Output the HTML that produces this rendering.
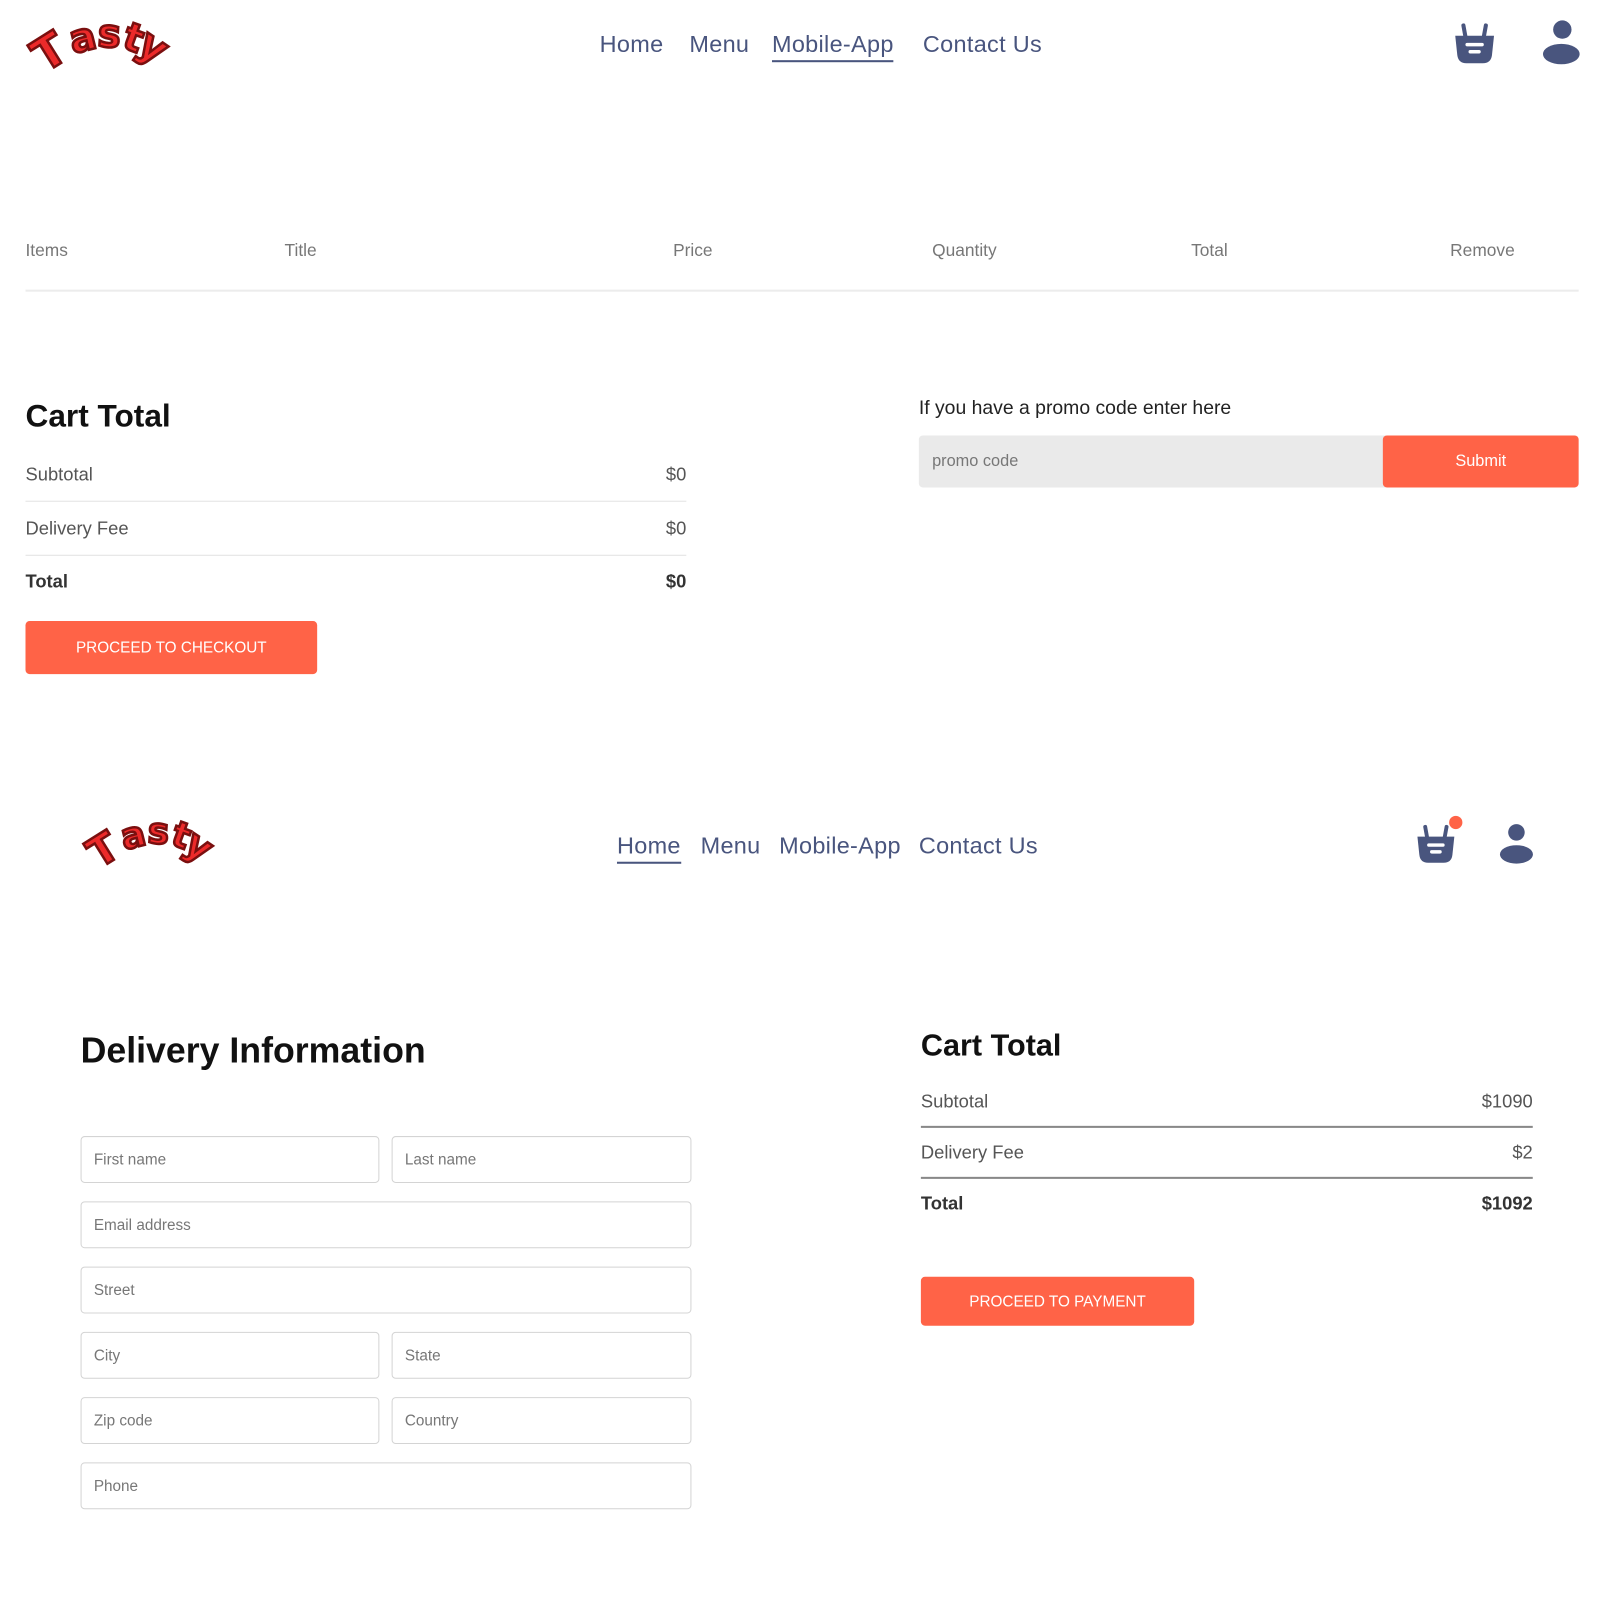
<!DOCTYPE html>
<html><head><meta charset="utf-8">
<style>
*{margin:0;padding:0;box-sizing:border-box}
html,body{width:1599px;height:1599px;overflow:hidden;background:#fff}
body{font-family:"Liberation Sans",sans-serif}
#w{position:absolute;left:0;top:0;width:1568px;height:1568px;transform:scale(1.0198);transform-origin:0 0}
.a{position:absolute;white-space:nowrap}
.nav{font-size:23px;color:#49557e;letter-spacing:0.3px}
.ul{border-bottom:2px solid #49557e;padding-bottom:2px}
.hd{font-size:17px;color:#777}
.row{font-size:18px;color:#555}
.hr{position:absolute;height:1px;background:#e2e2e2}
.hr2{position:absolute;height:2px;background:#888}
.btn{position:absolute;background:#ff6347;color:#fff;font-size:15px;display:flex;align-items:center;justify-content:center;border-radius:4px}
.in{position:absolute;height:46px;border:1px solid #d4d4d4;border-radius:4px;font-size:15px;color:#777;padding-left:12px;display:flex;align-items:center}
.logo span{position:absolute;font-weight:900;color:#ec2a2a;-webkit-text-stroke:2.5px #7a0f0f;font-family:"DejaVu Sans","Liberation Sans",sans-serif;line-height:1}
</style></head><body><div id="w">

<svg width="0" height="0" style="position:absolute"><defs>
<symbol id="bk" viewBox="0 0 42 44"><path d="M12 16 L10 5 M30 16 L32 5" stroke="#49557e" stroke-width="4" stroke-linecap="round"/><path d="M2 15 H40 L38 34 Q37 42 29 42 H13 Q5 42 4 34 Z" fill="#49557e"/><rect x="12" y="22" width="18" height="3.5" rx="1.7" fill="#fff"/><rect x="15" y="29" width="12" height="3.5" rx="1.7" fill="#fff"/></symbol>
</defs></svg>

<!-- logo 1 -->
<div class="a logo" style="left:30px;top:8px;width:150px;height:70px">
<span style="left:4px;top:22px;font-size:44px;transform:rotate(-32deg)">T</span>
<span style="left:38px;top:10px;font-size:38px;transform:rotate(-14deg)">a</span>
<span style="left:66px;top:6px;font-size:38px;transform:rotate(4deg)">s</span>
<span style="left:92px;top:10px;font-size:38px;transform:rotate(20deg)">t</span>
<span style="left:107px;top:18px;font-size:40px;transform:rotate(34deg)">y</span>
</div>
<div class="a nav" style="left:588px;top:30px">Home</div>
<div class="a nav" style="left:676px;top:30px">Menu</div>
<div class="a nav ul" style="left:757px;top:30px">Mobile-App</div>
<div class="a nav" style="left:905px;top:30px">Contact Us</div>
<svg class="a" style="left:1425px;top:20px" width="42" height="44"><use href="#bk"/></svg>
<svg class="a" style="left:1511px;top:18px" width="40" height="46" viewBox="0 0 40 46"><circle cx="21" cy="11" r="9" fill="#49557e"/><ellipse cx="20" cy="35" rx="18" ry="10" fill="#49557e"/></svg>

<!-- table header -->
<div class="a hd" style="left:25px;top:236px">Items</div>
<div class="a hd" style="left:279px;top:236px">Title</div>
<div class="a hd" style="left:660px;top:236px">Price</div>
<div class="a hd" style="left:914px;top:236px">Quantity</div>
<div class="a hd" style="left:1168px;top:236px">Total</div>
<div class="a hd" style="left:1422px;top:236px">Remove</div>
<div class="hr" style="left:25px;top:284px;width:1523px;background:#ececec;height:2px"></div>

<!-- cart total 1 -->
<div class="a" style="left:25px;top:390px;font-size:31px;font-weight:bold;color:#111">Cart Total</div>
<div class="a row" style="left:25px;top:455px">Subtotal</div>
<div class="a row" style="right:895px;top:455px">$0</div>
<div class="hr" style="left:25px;top:491px;width:648px"></div>
<div class="a row" style="left:25px;top:508px">Delivery Fee</div>
<div class="a row" style="right:895px;top:508px">$0</div>
<div class="hr" style="left:25px;top:544px;width:648px"></div>
<div class="a row" style="left:25px;top:560px;font-weight:bold;color:#333">Total</div>
<div class="a row" style="right:895px;top:560px;font-weight:bold;color:#333">$0</div>
<div class="btn" style="left:25px;top:609px;width:286px;height:52px">PROCEED TO CHECKOUT</div>

<div class="a" style="left:901px;top:390px;font-size:19px;color:#222">If you have a promo code enter here</div>
<div class="a" style="left:901px;top:427px;width:460px;height:51px;background:#eaeaea;border-radius:4px 0 0 4px;font-size:16px;color:#777;padding-left:13px;display:flex;align-items:center">promo code</div>
<div class="btn" style="left:1356px;top:427px;width:192px;height:51px;font-size:16px">Submit</div>

<!-- nav 2 -->
<div class="a logo" style="left:84px;top:794px;width:140px;height:65px">
<span style="left:4px;top:20px;font-size:40px;transform:rotate(-32deg)">T</span>
<span style="left:35px;top:9px;font-size:35px;transform:rotate(-14deg)">a</span>
<span style="left:61px;top:5px;font-size:35px;transform:rotate(4deg)">s</span>
<span style="left:85px;top:9px;font-size:35px;transform:rotate(20deg)">t</span>
<span style="left:99px;top:17px;font-size:37px;transform:rotate(34deg)">y</span>
</div>
<div class="a nav ul" style="left:605px;top:816px">Home</div>
<div class="a nav" style="left:687px;top:816px">Menu</div>
<div class="a nav" style="left:764px;top:816px">Mobile-App</div>
<div class="a nav" style="left:901px;top:816px">Contact Us</div>
<svg class="a" style="left:1388px;top:806px" width="40" height="42"><use href="#bk"/></svg>
<div class="a" style="left:1421px;top:800px;width:13px;height:13px;border-radius:50%;background:#ff6347"></div>
<svg class="a" style="left:1469px;top:806px" width="36" height="42" viewBox="0 0 40 46"><circle cx="20" cy="11" r="9" fill="#49557e"/><ellipse cx="20" cy="35" rx="18" ry="10" fill="#49557e"/></svg>

<!-- delivery info -->
<div class="a" style="left:79px;top:1011px;font-size:35px;font-weight:bold;color:#111">Delivery Information</div>
<div class="in" style="left:79px;top:1114px;width:293px">First name</div>
<div class="in" style="left:384px;top:1114px;width:294px">Last name</div>
<div class="in" style="left:79px;top:1178px;width:599px">Email address</div>
<div class="in" style="left:79px;top:1242px;width:599px">Street</div>
<div class="in" style="left:79px;top:1306px;width:293px">City</div>
<div class="in" style="left:384px;top:1306px;width:294px">State</div>
<div class="in" style="left:79px;top:1370px;width:293px">Zip code</div>
<div class="in" style="left:384px;top:1370px;width:294px">Country</div>
<div class="in" style="left:79px;top:1434px;width:599px">Phone</div>

<!-- cart total 2 -->
<div class="a" style="left:903px;top:1009px;font-size:30px;font-weight:bold;color:#111">Cart Total</div>
<div class="a row" style="left:903px;top:1070px">Subtotal</div>
<div class="a row" style="right:65px;top:1070px">$1090</div>
<div class="hr2" style="left:903px;top:1104px;width:600px"></div>
<div class="a row" style="left:903px;top:1120px">Delivery Fee</div>
<div class="a row" style="right:65px;top:1120px">$2</div>
<div class="hr2" style="left:903px;top:1154px;width:600px"></div>
<div class="a row" style="left:903px;top:1170px;font-weight:bold;color:#333">Total</div>
<div class="a row" style="right:65px;top:1170px;font-weight:bold;color:#333">$1092</div>
<div class="btn" style="left:903px;top:1252px;width:268px;height:48px">PROCEED TO PAYMENT</div>

</div></body></html>
